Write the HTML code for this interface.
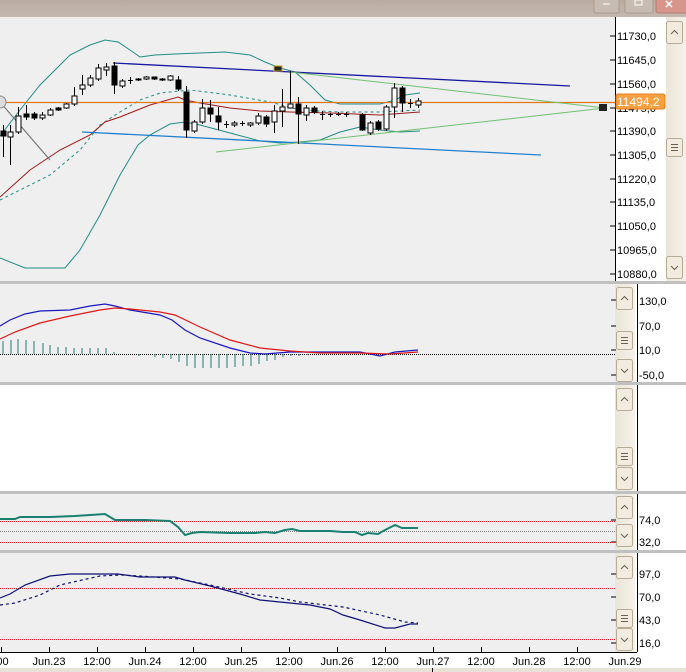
<!DOCTYPE html>
<html><head><meta charset="utf-8"><style>
html,body{margin:0;padding:0;width:686px;height:672px;overflow:hidden;background:#fff}
svg{display:block}
text{font-family:"Liberation Sans",sans-serif;font-size:11px;fill:#000}
</style></head><body>
<svg width="686" height="672" viewBox="0 0 686 672" xmlns="http://www.w3.org/2000/svg">
<defs>
<linearGradient id="tb" x1="0" y1="0" x2="0" y2="1"><stop offset="0" stop-color="#b9aba0"/><stop offset="1" stop-color="#c4b8ae"/></linearGradient>
<linearGradient id="sb" x1="0" y1="0" x2="1" y2="0"><stop offset="0" stop-color="#ebe5d8"/><stop offset="1" stop-color="#f6f2ea"/></linearGradient>
<g id="btnup"><rect x="0.5" y="0.5" width="16" height="22" rx="2" fill="#f2ece0" stroke="#b8ab96"/><path d="M5 13 L8.5 9.5 L12 13" fill="none" stroke="#6a6050"/></g>
<g id="btndn"><rect x="0.5" y="0.5" width="16" height="22" rx="2" fill="#f2ece0" stroke="#b8ab96"/><path d="M5 10 L8.5 13.5 L12 10" fill="none" stroke="#6a6050"/></g>
<g id="btnmid"><rect x="0.5" y="0.5" width="16" height="18" rx="2" fill="#f2ece0" stroke="#b8ab96"/><path d="M5 6.5h7M5 9.5h7M5 12.5h7" stroke="#6a6050"/></g>
</defs>
<rect x="0" y="0" width="686" height="17" fill="url(#tb)"/>
<rect x="594" y="-3" width="25" height="16" rx="2" fill="#c8bcb2" stroke="#a89c92"/>
<rect x="625" y="-3" width="28" height="16" rx="2" fill="#c8bcb2" stroke="#a89c92"/>
<rect x="656" y="-3" width="32" height="16" rx="2" fill="#d8958a" stroke="#b08078"/>
<path d="M603 4h7" stroke="#fff"/><rect x="635" y="0" width="7" height="5" fill="none" stroke="#fff"/>
<path d="M666 1l6 6M672 1l-6 6" stroke="#fff" stroke-width="1.5"/>

<rect x="0" y="17" width="615" height="264" fill="#efefef"/>
<rect x="615" y="17" width="51" height="264" fill="#fff"/>
<rect x="666" y="17" width="20" height="264" fill="url(#sb)"/>
<use href="#btnup" x="666" y="21"/><use href="#btnmid" x="666" y="138"/><use href="#btndn" x="666" y="256"/>
<line x1="615.5" y1="17" x2="615.5" y2="281" stroke="#000"/>
<g stroke="#000">
<path d="M610 36h5M610 60h5M610 84h5M610 108h5M610 131h5M610 155h5M610 179h5M610 202h5M610 226h5M610 250h5M610 274h5"/>
</g>
<g>
<text x="617" y="40">11730,0</text><text x="617" y="64">11645,0</text><text x="617" y="88">11560,0</text><text x="617" y="112">11475,0</text><text x="617" y="135">11390,0</text><text x="617" y="159">11305,0</text><text x="617" y="183">11220,0</text><text x="617" y="206">11135,0</text><text x="617" y="230">11050,0</text><text x="617" y="254">10965,0</text><text x="617" y="278">10880,0</text>
</g>
<rect x="616" y="94" width="49" height="15" rx="2" fill="#f7a040" stroke="#e08020"/>
<text x="617" y="106" style="fill:#fff;font-size:12px">11494,2</text>

<g fill="none" stroke="#208c84" stroke-width="1">
<path d="M0 136 L20 110 L40 85 L70 55 L90 45 L105 40 L118 42 L130 50 L140 57 L155 55 L175 54 L200 53 L225 52 L250 55 L265 62 L280 68 L295 72 L310 85 L325 100 L340 104 L380 104 L395 100 L405 95 L420 93"/>
<path d="M0 258 L25 268 L65 268 L80 250 L100 215 L120 175 L138 145 L150 135 L170 124 L185 122 L200 125 L230 133 L260 141 L280 143 L300 142 L320 140 L340 132 L360 127 L380 130 L400 132 L420 131"/>
</g>
<path d="M0 200 L50 175 L80 150 L100 125 L120 112 L140 100 L160 93 L190 90 L230 95 L270 102 L300 110 L340 112 L380 112 L420 110" fill="none" stroke="#208c84" stroke-dasharray="3,3"/>
<path d="M0 197 L30 170 L60 150 L90 135 L105 122 L120 117 L150 105 L178 97 L185 100 L200 103 L230 108 L260 111 L290 112 L330 113 L380 115 L420 112" fill="none" stroke="#a01818"/>
<line x1="0" y1="102.5" x2="615" y2="102.5" stroke="#e07818" stroke-width="1.2"/>
<line x1="113" y1="63" x2="570" y2="86" stroke="#1818a0" stroke-width="1.3"/>
<line x1="82" y1="132" x2="541" y2="155" stroke="#2080d0" stroke-width="1.3"/>
<line x1="290" y1="72" x2="605" y2="108" stroke="#70c070"/>
<line x1="216" y1="152" x2="605" y2="108" stroke="#70c070"/>
<rect x="599" y="104" width="8" height="7" fill="#222"/>
<line x1="0" y1="102" x2="50" y2="160" stroke="#777" stroke-width="1.2"/>
<circle cx="0" cy="102" r="6" fill="#ddd" stroke="#888"/>
<rect x="274" y="66" width="8" height="5" fill="#222" stroke="#c8a020"/>
<g stroke="#000" stroke-width="1">
<path d="M3.5 125V157M10.5 125V165M18.5 107V134M26.5 105V120M34.5 112V120M42.5 112V120M50.5 108V116M58.5 107V111M66.5 103V109M74.5 87V106M82.5 75V95M90.5 75V87M98.5 64V81M106.5 63V76M114.5 62V94M122.5 79V88M130.5 77V84M138.5 78V81M146.5 76V80M154.5 77V80M162.5 78V81M170.5 75V81M178.5 76V91M186.5 86V138M194.5 120V133M202.5 99V124M210.5 100V122M218.5 107V130M226.5 121V128M234.5 121V127M242.5 121V126M250.5 122V127M258.5 113V125M266.5 115V127M274.5 105V133M282.5 89V127M290.5 71V108M298.5 97V144M306.5 105V121M314.5 106V114M322.5 111V120M330.5 113V117M338.5 112V116M346.5 112V117M362.5 113V131M370.5 121V135M378.5 120V131M386.5 105V131M394.5 83V118M402.5 86V112M410.5 99V108M418.5 98V108"/>
</g>
<g stroke="#000" fill="#000">
<rect x="1" y="131" width="5" height="5"/><rect x="24" y="114" width="5" height="3"/><rect x="32" y="114" width="5" height="4"/><rect x="56" y="108" width="5" height="2"/><rect x="112" y="66" width="5" height="19"/><rect x="152" y="77" width="5" height="2"/><rect x="160" y="79" width="5" height="1"/><rect x="176" y="80" width="5" height="9"/><rect x="184" y="92" width="5" height="38"/><rect x="208" y="108" width="5" height="6"/><rect x="216" y="116" width="5" height="6"/><rect x="264" y="117" width="5" height="7"/><rect x="296" y="104" width="5" height="10"/><rect x="312" y="108" width="5" height="4"/><rect x="360" y="115" width="5" height="15"/><rect x="376" y="122" width="5" height="7"/><rect x="400" y="88" width="5" height="15"/>
</g>
<g stroke="#000" fill="#fff">
<rect x="8" y="132" width="5" height="5"/><rect x="16" y="116" width="5" height="16"/><rect x="40" y="115" width="5" height="3"/><rect x="48" y="110" width="5" height="5"/><rect x="64" y="104" width="5" height="4"/><rect x="72" y="96" width="5" height="8"/><rect x="80" y="85" width="5" height="4"/><rect x="88" y="78" width="5" height="7"/><rect x="96" y="68" width="5" height="11"/><rect x="104" y="67" width="5" height="3"/><rect x="120" y="81" width="5" height="5"/><rect x="136" y="79" width="5" height="1"/><rect x="144" y="77" width="5" height="2"/><rect x="168" y="76" width="5" height="4"/><rect x="192" y="122" width="5" height="9"/><rect x="200" y="108" width="5" height="14"/><rect x="232" y="123" width="5" height="2"/><rect x="248" y="123" width="5" height="2"/><rect x="256" y="116" width="5" height="7"/><rect x="272" y="111" width="5" height="11"/><rect x="280" y="107" width="5" height="4"/><rect x="288" y="104" width="5" height="4"/><rect x="304" y="108" width="5" height="7"/><rect x="368" y="123" width="5" height="10"/><rect x="384" y="107" width="5" height="22"/><rect x="392" y="88" width="5" height="19"/><rect x="416" y="101" width="5" height="4"/>
</g>
<path d="M128 80.5h5M224 124.5h5M240 123.5h5M320 114.5h5M328 114.5h5M336 114.5h5M344 114.5h5M408 103.5h5" stroke="#000"/>

<rect x="0" y="281" width="686" height="3" fill="#c0c0c0"/>
<rect x="0" y="284" width="615" height="98" fill="#efefef"/>
<rect x="615" y="284" width="20" height="98" fill="url(#sb)"/>
<rect x="635" y="284" width="51" height="98" fill="#fff"/>
<use href="#btnup" x="616" y="287"/><use href="#btnmid" x="616" y="331"/><use href="#btndn" x="616" y="359"/>
<line x1="637.5" y1="284" x2="637.5" y2="382" stroke="#000"/>
<path d="M611 300h5M611 326h5M611 350h5M611 375h5" stroke="#000"/>
<text x="639" y="305">130,0</text><text x="639" y="330">70,0</text><text x="639" y="354">10,0</text><text x="639" y="379">-50,0</text>
<line x1="0" y1="354.5" x2="615" y2="354.5" stroke="#000" stroke-dasharray="1,1"/>
<g stroke="#1a8070">
<path d="M3 341V354M11 340V354M18 339V354M26 340V354M34 341V354M43 343V354M50 345V354M58 347V354M66 347V354M74 348V354M82 348V354M90 348V354M98 348V354M106 348V354M114 352V354M139 354V356M155 354V357M163 354V358M171 354V359M179 354V362M187 354V366M195 354V368M203 354V368M211 354V368M219 354V368M227 354V368M235 354V367M243 354V366M251 354V366M259 354V364M267 354V361M275 354V360M283 354V357M291 354V356M299 354V356M307 354V355"/>
</g>
<path d="M0 326 L10 320 L25 314 L40 311 L70 310 L90 306 L105 304 L115 306 L130 310 L160 315 L172 320 L185 330 L200 338 L230 348 L250 353 L265 354 L290 352 L330 352 L360 352 L380 356 L395 352 L418 350" fill="none" stroke="#1818c0" stroke-width="1.2"/>
<path d="M0 339 L15 332 L40 323 L70 316 L100 310 L115 308 L130 309 L160 312 L175 315 L200 327 L230 340 L260 348 L290 351 L320 353 L360 353 L390 354 L418 352" fill="none" stroke="#e01818" stroke-width="1.2"/>

<rect x="0" y="382" width="686" height="3" fill="#c0c0c0"/>
<rect x="0" y="385" width="615" height="106" fill="#fff"/>
<rect x="615" y="385" width="20" height="106" fill="url(#sb)"/>
<use href="#btnup" x="616" y="388"/><use href="#btnmid" x="616" y="447"/><use href="#btndn" x="616" y="467"/>
<line x1="637.5" y1="385" x2="637.5" y2="491" stroke="#000"/>

<rect x="0" y="491" width="686" height="3" fill="#c0c0c0"/>
<rect x="0" y="494" width="615" height="56" fill="#efefef"/>
<rect x="615" y="494" width="20" height="56" fill="url(#sb)"/>
<rect x="635" y="494" width="51" height="56" fill="#fff"/>
<use href="#btnup" x="616" y="496"/><use href="#btndn" x="616" y="524"/>
<line x1="637.5" y1="494" x2="637.5" y2="550" stroke="#000"/>
<path d="M611 520h5M611 542h5" stroke="#000"/>
<text x="639" y="524">74,0</text><text x="639" y="546">32,0</text>
<line x1="0" y1="521.5" x2="615" y2="521.5" stroke="#d02020" stroke-dasharray="1,1"/>
<line x1="0" y1="531.5" x2="615" y2="531.5" stroke="#808080" stroke-dasharray="1,1"/>
<line x1="0" y1="542.5" x2="615" y2="542.5" stroke="#d02020" stroke-dasharray="1,1"/>
<path d="M0 519 L15 519 L20 517 L50 517 L75 516 L90 515 L105 514 L115 520 L145 520 L170 521 L178 527 L185 535 L192 533 L200 532 L230 533 L255 533 L265 532 L275 533 L285 530 L292 529 L300 531 L330 531 L343 532 L355 532 L362 535 L368 533 L378 534 L385 530 L395 525 L402 528 L418 528" fill="none" stroke="#1a8070" stroke-width="2"/>

<rect x="0" y="550" width="686" height="3" fill="#c0c0c0"/>
<rect x="0" y="553" width="615" height="99" fill="#efefef"/>
<rect x="615" y="553" width="20" height="99" fill="url(#sb)"/>
<rect x="635" y="553" width="51" height="99" fill="#fff"/>
<use href="#btnup" x="616" y="556"/><use href="#btnmid" x="616" y="609"/><use href="#btndn" x="616" y="628"/>
<line x1="637.5" y1="553" x2="637.5" y2="652" stroke="#000"/>
<path d="M611 574h5M611 597h5M611 620h5M611 643h5" stroke="#000"/>
<text x="639" y="578">97,0</text><text x="639" y="601">70,0</text><text x="639" y="624">43,0</text><text x="639" y="647">16,0</text>
<line x1="0" y1="588.5" x2="615" y2="588.5" stroke="#d02020" stroke-dasharray="1,1"/>
<line x1="0" y1="639.5" x2="615" y2="639.5" stroke="#d02020" stroke-dasharray="1,1"/>
<path d="M0 598 L10 594 L25 585 L50 576 L70 574 L95 574 L118 574 L140 577 L175 577 L185 580 L210 586 L240 594 L260 600 L280 602 L310 605 L330 609 L343 615 L360 620 L385 628 L395 628 L410 624 L418 624" fill="none" stroke="#101078" stroke-width="1.2"/>
<path d="M0 605 L15 603 L40 595 L60 585 L100 576 L120 575 L140 576 L180 579 L210 585 L250 594 L280 598 L300 602 L343 607 L380 615 L405 622 L418 623" fill="none" stroke="#101078" stroke-width="1.2" stroke-dasharray="3,3"/>

<rect x="0" y="652" width="686" height="16" fill="#fff"/>
<line x1="0" y1="652.5" x2="637" y2="652.5" stroke="#000"/>
<path d="M49.5 647v5M97.5 647v5M145.5 647v5M193.5 647v5M241.5 647v5M289.5 647v5M337.5 647v5M385.5 647v5M433.5 647v5M481.5 647v5M529.5 647v5M577.5 647v5M1.5 647v5" stroke="#000"/>
<g text-anchor="middle">
<text x="1" y="665">:00</text><text x="49" y="665">Jun.23</text><text x="97" y="665">12:00</text><text x="145" y="665">Jun.24</text><text x="193" y="665">12:00</text><text x="241" y="665">Jun.25</text><text x="289" y="665">12:00</text><text x="337" y="665">Jun.26</text><text x="385" y="665">12:00</text><text x="433" y="665">Jun.27</text><text x="481" y="665">12:00</text><text x="529" y="665">Jun.28</text><text x="577" y="665">12:00</text><text x="625" y="665">Jun.29</text>
</g>
<rect x="0" y="668" width="686" height="4" fill="#e8e2d6"/>
<line x1="432.5" y1="668" x2="432.5" y2="672" stroke="#000"/>
</svg>
</body></html>
